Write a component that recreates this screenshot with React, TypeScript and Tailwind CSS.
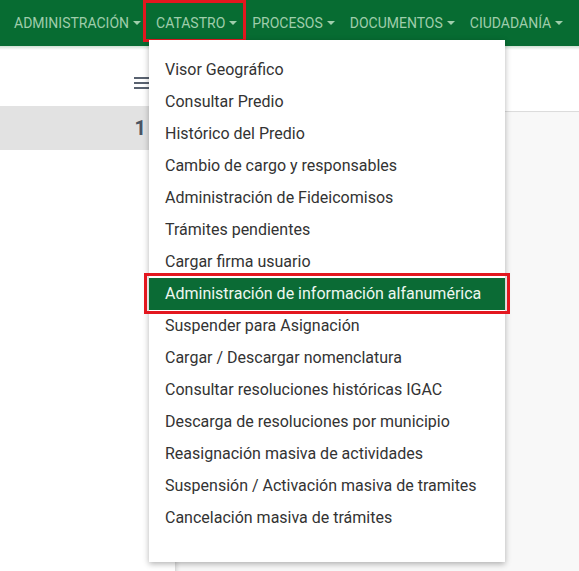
import React from 'react';

const navItems = ['ADMINISTRACIÓN', 'CATASTRO', 'PROCESOS', 'DOCUMENTOS', 'CIUDADANÍA'];

const catastroItems = [
  'Visor Geográfico',
  'Consultar Predio',
  'Histórico del Predio',
  'Cambio de cargo y responsables',
  'Administración de Fideicomisos',
  'Trámites pendientes',
  'Cargar firma usuario',
  'Administración de información alfanumérica',
  'Suspender para Asignación',
  'Cargar / Descargar nomenclatura',
  'Consultar resoluciones históricas IGAC',
  'Descarga de resoluciones por municipio',
  'Reasignación masiva de actividades',
  'Suspensión / Activación masiva de tramites',
  'Cancelación masiva de trámites',
];

function Caret() {
  return (
    <span className="ml-[4px] inline-block h-0 w-0 border-x-[4px] border-t-[4px] border-x-transparent border-t-[#9fcdab] align-middle" />
  );
}

export default function App() {
  return (
    <div className="relative h-[571px] w-[579px] overflow-hidden bg-white font-['Roboto',sans-serif]">
      {/* top bar */}
      <nav className="flex h-[46px] items-center bg-[#076c32] pl-[14px] text-[14px] text-[#9fcdab]">
        {navItems.map((item) => (
          <div key={item} className="relative mr-[15px] flex h-full items-center">
            {item}
            <Caret />
            {item === 'CATASTRO' && (
              <span className="absolute -left-[13px] -right-[9px] top-0 h-[42px] border-[3px] border-[#e3171f]" />
            )}
          </div>
        ))}
      </nav>
      <div className="h-[4px] bg-gradient-to-b from-[#cfe0d3] to-white" />

      {/* page under the menu */}
      <div className="flex h-[56px] items-start justify-end pr-[429px] pt-[26px]">
        <svg width="16" height="13" viewBox="0 0 16 13">
          <rect x="0" y="1" width="16" height="2" fill="#596270" />
          <rect x="0" y="6" width="16" height="2" fill="#596270" />
          <rect x="0" y="11" width="16" height="2" fill="#596270" />
        </svg>
      </div>
      <div className="flex">
        <div className="w-[175px]">
          <div className="flex h-[44px] items-center justify-end bg-[#e2e2e2] pr-[29px] text-[20px] font-bold text-[#4a5462]">
            1
          </div>
        </div>
        <div className="flex-1">
          <div className="h-[5px] bg-white" />
          <div className="h-[470px] border-l border-t border-[#dcdcdc] bg-[#f8f8f8] shadow-[inset_4px_0_4px_-3px_rgba(0,0,0,0.12)]" />
        </div>
      </div>

      {/* dropdown */}
      <div className="absolute left-[149px] top-[40px] w-[356px] bg-white pb-[28px] pt-[14px] shadow-[0_2px_6px_rgba(0,0,0,0.3)]">
        {catastroItems.map((item) => {
          const active = item === 'Administración de información alfanumérica';
          return (
            <div
              key={item}
              className={`relative flex h-[32px] items-center whitespace-nowrap pl-[16px] text-[16px] ${
                active ? 'bg-[#0b6b35] text-[#eef8f0]' : 'text-[#333333]'
              }`}
            >
              {item}
              {active && (
                <span className="absolute -bottom-[4px] -left-[5px] -right-[5px] -top-[5px] border-[3px] border-[#e3171f]" />
              )}
            </div>
          );
        })}
      </div>
    </div>
  );
}
